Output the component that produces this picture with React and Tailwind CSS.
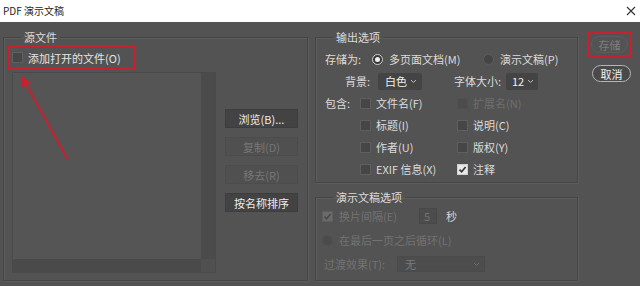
import React from "react";

const Check = ({ checked = false, disabled = false }) => (
  <span
    className={
      "inline-flex items-center justify-center w-[11px] h-[11px] shrink-0 border " +
      (checked
        ? disabled
          ? "bg-[#6a6a6a] border-[#5e5e5e]"
          : "bg-[#e8e8e8] border-[#cfcfcf]"
        : disabled
        ? "bg-[#4c4c4c] border-[#505050]"
        : "bg-[#464646] border-[#5f5f5f]")
    }
  >
    {checked && (
      <svg width="9" height="9" viewBox="0 0 9 9">
        <path d="M1.5 4.6 L3.6 6.8 L7.6 2" fill="none" stroke={disabled ? "#4a4a4a" : "#333"} strokeWidth="1.6" />
      </svg>
    )}
  </span>
);

const Radio = ({ selected = false, disabled = false }) => (
  <span
    className={
      "inline-flex items-center justify-center w-[11px] h-[11px] rounded-full shrink-0 border " +
      (selected ? "bg-[#3a3a3a] border-[#cfcfcf]" : disabled ? "bg-[#4b4b4b] border-[#505050]" : "bg-[#454545] border-[#5c5c5c]")
    }
  >
    {selected && <span className="w-[5px] h-[5px] rounded-full bg-[#f0f0f0]" />}
  </span>
);

const Chevron = ({ color = "#bdbdbd" }) => (
  <svg width="7" height="5" viewBox="0 0 7 5">
    <path d="M1 1 L3.5 3.5 L6 1" fill="none" stroke={color} strokeWidth="1" />
  </svg>
);

const Btn = ({ children, disabled }) => (
  <div
    className={
      "w-[73px] h-[19px] flex items-center justify-center border " +
      (disabled
        ? "bg-[#505050] border-[#4c4c4c] text-[#777777]"
        : "bg-[#434343] border-[#3d3d3d] text-[#ececec]")
    }
  >
    {children}
  </div>
);

const fieldsetCls =
  "border border-[#464646] shadow-[inset_1px_1px_0_#5c5c5c,1px_1px_0_#5c5c5c]";

export default function App() {
  return (
    <div className="relative w-[640px] h-[286px] bg-[#535353] overflow-hidden font-['Noto_Sans_CJK_SC',sans-serif] text-[11px] leading-[14px] text-[#dcdcdc]">
      {/* Title bar */}
      <div className="h-[22px] bg-white flex items-center justify-between pl-[3px] pr-[4px] text-[#1e1e1e]">
        <span className="text-[10px]">PDF 演示文稿</span>
        <svg width="10" height="10" viewBox="0 0 10 10">
          <path d="M1 1 L9 9 M9 1 L1 9" stroke="#333" strokeWidth="1.1" />
        </svg>
      </div>

      <div className="flex pl-[3px] pt-[8px]">
        {/* Left group */}
        <fieldset className={fieldsetCls + " w-[305px] h-[251px]"}>
          <legend className="ml-[17px] px-[3px] leading-[14px]">源文件</legend>
          <div className="ml-[4px] mt-[1px] w-[128px] h-[25px] border-2 border-[#c8202e] flex items-center pl-[2px] gap-[5px]">
            <Check />
            <span className="text-[#e4e4e4]">添加打开的文件(O)</span>
          </div>
          <div className="flex mt-[2px] ml-[8px]">
            <div className="flex flex-col w-[204px] h-[201px] border border-[#4a4a4a]">
              <div className="flex flex-1">
                <div className="flex-1 bg-[#555555]" />
                <div className="w-[14px] bg-[#4b4b4b]" />
              </div>
              <div className="flex h-[13px]">
                <div className="flex-1 bg-[#4a4a4a]" />
                <div className="w-[14px] bg-[#505050]" />
              </div>
            </div>
            <div className="ml-[9px] pt-[37px] flex flex-col gap-[9px]">
              <Btn>浏览(B)...</Btn>
              <Btn disabled>复制(D)</Btn>
              <Btn disabled>移去(R)</Btn>
              <Btn>按名称排序</Btn>
            </div>
          </div>
        </fieldset>

        {/* Right column */}
        <div className="ml-[7px] w-[263px] flex flex-col gap-[7px]">
          <fieldset className={fieldsetCls + " h-[153px]"}>
            <legend className="ml-[17px] px-[3px] leading-[14px]">输出选项</legend>
            <div className="mt-[4px] flex flex-col">
              <div className="h-[22px] flex items-center pl-[9px]">
                <span className="w-[47px]">存储为:</span>
                <div className="w-[111px] flex items-center gap-[6px]">
                  <Radio selected />
                  <span>多页面文档(M)</span>
                </div>
                <div className="flex items-center gap-[6px]">
                  <Radio />
                  <span>演示文稿(P)</span>
                </div>
              </div>
              <div className="h-[22px] flex items-center pl-[9px]">
                <span className="w-[45px] text-right">背景:</span>
                <div className="ml-[8px] w-[44px] h-[17px] bg-[#444444] rounded-[2px] flex items-center justify-between pl-[7px] pr-[5px] text-[#f0f0f0]">
                  <span>白色</span>
                  <Chevron />
                </div>
                <span className="ml-[32px] w-[52px]">字体大小:</span>
                <div className="w-[32px] h-[17px] bg-[#444444] rounded-[2px] flex items-center justify-between pl-[6px] pr-[4px] text-[#f0f0f0]">
                  <span>12</span>
                  <Chevron />
                </div>
              </div>
              {[
                ["包含:", "文件名(F)", "扩展名(N)", false, true],
                ["", "标题(I)", "说明(C)", false, false],
                ["", "作者(U)", "版权(Y)", false, false],
                ["", "EXIF 信息(X)", "注释", true, false],
              ].map(([lab, a, b, bChecked, bDisabled], i) => (
                <div key={i} className="h-[22px] flex items-center pl-[9px]">
                  <span className="w-[35px]">{lab}</span>
                  <div className="w-[97px] flex items-center gap-[5px]">
                    <Check />
                    <span>{a}</span>
                  </div>
                  <div className="flex items-center gap-[5px]">
                    <Check checked={bChecked} disabled={bDisabled} />
                    <span className={bDisabled ? "text-[#6f6f6f]" : ""}>{b}</span>
                  </div>
                </div>
              ))}
            </div>
          </fieldset>

          <fieldset className={fieldsetCls + " h-[91px]"}>
            <legend className="ml-[17px] px-[3px] leading-[14px]">演示文稿选项</legend>
            <div className="flex flex-col">
              <div className="h-[24px] flex items-center pl-[6px]">
                <Check checked disabled />
                <span className="ml-[6px] w-[80px] text-[#727272]">换片间隔(E)</span>
                <div className="w-[18px] h-[16px] bg-[#4c4c4c] border border-[#494949] flex items-center pl-[4px] text-[#727272]">5</div>
                <span className="ml-[9px] text-[#d8d8d8]">秒</span>
              </div>
              <div className="h-[24px] flex items-center pl-[6px]">
                <Radio disabled />
                <span className="ml-[6px] text-[#727272]">在最后一页之后循环(L)</span>
              </div>
              <div className="h-[24px] flex items-center pl-[8px]">
                <span className="w-[73px] text-[#727272]">过渡效果(T):</span>
                <div className="w-[88px] h-[16px] bg-[#4d4d4d] border border-[#4a4a4a] flex items-center justify-between pl-[7px] pr-[4px] text-[#7a7a7a]">
                  <span>无</span>
                  <Chevron color="#6e6e6e" />
                </div>
              </div>
            </div>
          </fieldset>
        </div>

        {/* Right buttons */}
        <div className="ml-[9px] flex flex-col">
          <div className="mt-[2px] w-[45px] h-[25px] border-2 border-[#c8202e] flex items-center justify-center">
            <div className="w-[37px] h-[17px] rounded-full border border-[#5d5d5d] flex items-center justify-center text-[#7c7c7c]">
              存储
            </div>
          </div>
          <div className="mt-[8px] ml-[5px] w-[39px] h-[17px] rounded-full border border-[#b5b5b5] bg-[#4a4a4a] flex items-center justify-center text-[#f2f2f2]">
            取消
          </div>
        </div>
      </div>

      {/* Annotation arrow */}
      <svg className="absolute inset-0 pointer-events-none" width="640" height="286" viewBox="0 0 640 286">
        <line x1="68" y1="160" x2="25" y2="82" stroke="#c8202e" strokeWidth="2" />
        <polygon points="21,75 22.4,87.5 30.8,82.8" fill="#c8202e" />
      </svg>
    </div>
  );
}
